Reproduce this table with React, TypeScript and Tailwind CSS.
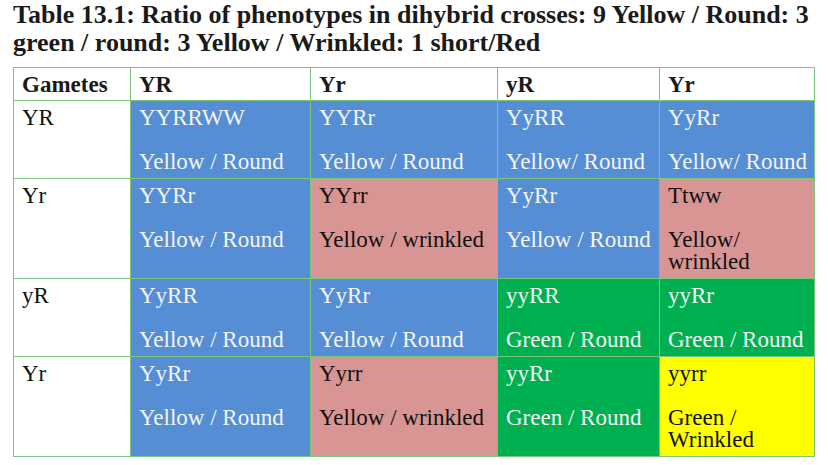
import React from "react";

type Cell = { geno: string; pheno: React.ReactNode; bg: string; fg: string };

const blue = "bg-[#558ed5]";
const pink = "bg-[#d99594]";
const green = "bg-[#00b050]";
const yellow = "bg-[#ffff00]";
const light = "text-[#f4f4f4]";
const dark = "text-[#111111]";

const header = ["Gametes", "YR", "Yr", "yR", "Yr"];

const rows: { gamete: string; cells: Cell[] }[] = [
  {
    gamete: "YR",
    cells: [
      { geno: "YYRRWW", pheno: "Yellow / Round", bg: blue, fg: light },
      { geno: "YYRr", pheno: "Yellow / Round", bg: blue, fg: light },
      { geno: "YyRR", pheno: "Yellow/ Round", bg: blue, fg: light },
      { geno: "YyRr", pheno: "Yellow/ Round", bg: blue, fg: light },
    ],
  },
  {
    gamete: "Yr",
    cells: [
      { geno: "YYRr", pheno: "Yellow / Round", bg: blue, fg: light },
      { geno: "YYrr", pheno: "Yellow / wrinkled", bg: pink, fg: dark },
      { geno: "YyRr", pheno: "Yellow / Round", bg: blue, fg: light },
      {
        geno: "Ttww",
        pheno: (
          <>
            Yellow/
            <br />
            wrinkled
          </>
        ),
        bg: pink,
        fg: dark,
      },
    ],
  },
  {
    gamete: "yR",
    cells: [
      { geno: "YyRR", pheno: "Yellow / Round", bg: blue, fg: light },
      { geno: "YyRr", pheno: "Yellow / Round", bg: blue, fg: light },
      { geno: "yyRR", pheno: "Green / Round", bg: green, fg: light },
      { geno: "yyRr", pheno: "Green / Round", bg: green, fg: light },
    ],
  },
  {
    gamete: "Yr",
    cells: [
      { geno: "YyRr", pheno: "Yellow / Round", bg: blue, fg: light },
      { geno: "Yyrr", pheno: "Yellow / wrinkled", bg: pink, fg: dark },
      { geno: "yyRr", pheno: "Green / Round", bg: green, fg: light },
      {
        geno: "yyrr",
        pheno: (
          <>
            Green /
            <br />
            Wrinkled
          </>
        ),
        bg: yellow,
        fg: dark,
      },
    ],
  },
];

export default function App() {
  return (
    <div className="w-[828px] h-[465px] bg-white pl-[13px] pt-[1px] font-['Liberation_Serif',serif]">
      <h1 className="text-[26px] leading-[28px] font-bold text-[#1a1a1a] whitespace-nowrap">
        Table 13.1: Ratio of phenotypes in dihybrid crosses: 9 Yellow / Round: 3
        <br />
        green / round: 3 Yellow / Wrinkled: 1 short/Red
      </h1>

      <div className="mt-[10px] w-[802px] grid grid-cols-[116px_179px_186px_161px_154px] gap-px p-px bg-[#7cc47a] text-[23px] leading-[22px]">
        {header.map((h, i) => (
          <div key={i} className="bg-white px-[8px] pt-[6px] pb-[4px] font-bold text-[#1a1a1a]">
            {h}
          </div>
        ))}

        {rows.map((r, ri) => (
          <React.Fragment key={ri}>
            <div className="bg-white px-[8px] pt-[6px] pb-[5px] text-[#111111]">{r.gamete}</div>
            {r.cells.map((c, ci) => (
              <div key={ci} className={`${c.bg} ${c.fg} px-[8px] pt-[6px] pb-[5px] whitespace-nowrap`}>
                <div>{c.geno}</div>
                <div className="h-[22px]" />
                <div>{c.pheno}</div>
              </div>
            ))}
          </React.Fragment>
        ))}
      </div>
    </div>
  );
}
